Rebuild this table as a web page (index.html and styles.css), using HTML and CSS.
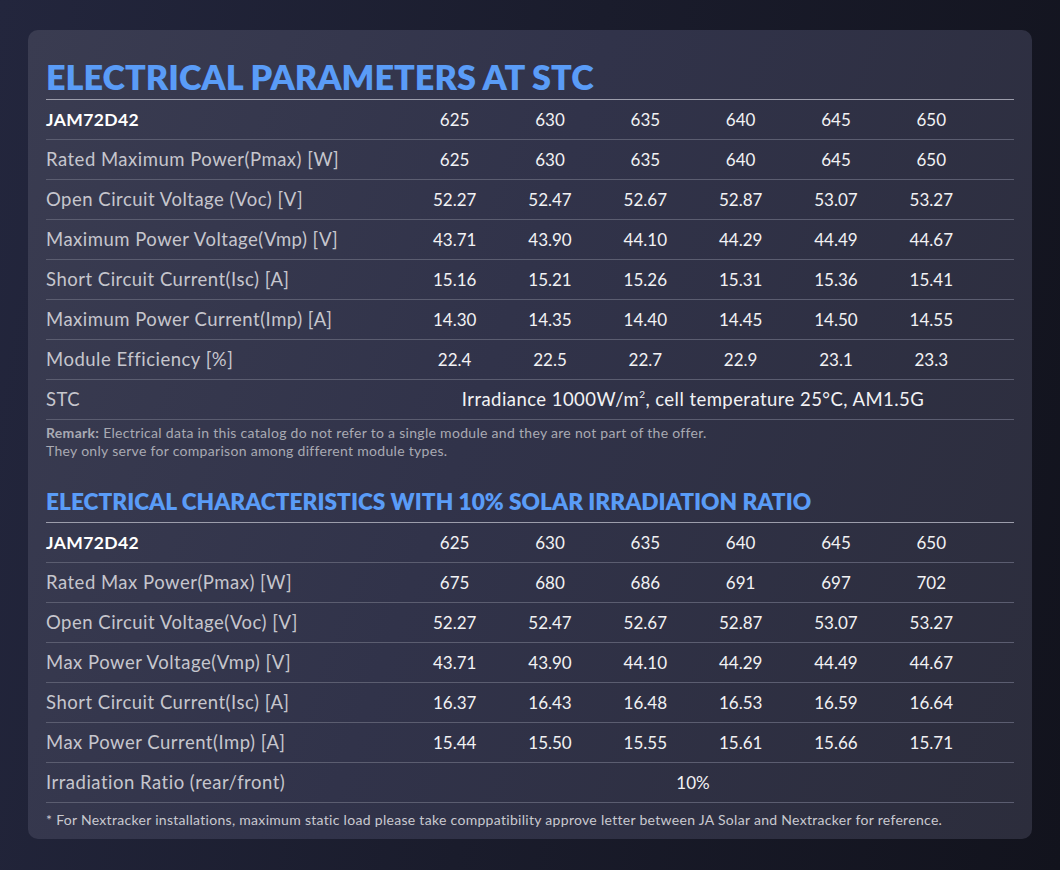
FILE: index.html
```html
<!DOCTYPE html>
<html lang="en">
<head>
<meta charset="utf-8">
<title>Electrical Parameters</title>
<link rel="stylesheet" href="styles.css">
</head>
<body>
<div class="card">
  <h1 class="title">ELECTRICAL PARAMETERS AT STC</h1>
  <div class="table">
    <div class="row head"><div class="label">JAM72D42</div><div class="v">625</div><div class="v">630</div><div class="v">635</div><div class="v">640</div><div class="v">645</div><div class="v">650</div></div>
    <div class="row"><div class="label">Rated Maximum Power(Pmax) [W]</div><div class="v">625</div><div class="v">630</div><div class="v">635</div><div class="v">640</div><div class="v">645</div><div class="v">650</div></div>
    <div class="row"><div class="label">Open Circuit Voltage (Voc) [V]</div><div class="v">52.27</div><div class="v">52.47</div><div class="v">52.67</div><div class="v">52.87</div><div class="v">53.07</div><div class="v">53.27</div></div>
    <div class="row"><div class="label">Maximum Power Voltage(Vmp) [V]</div><div class="v">43.71</div><div class="v">43.90</div><div class="v">44.10</div><div class="v">44.29</div><div class="v">44.49</div><div class="v">44.67</div></div>
    <div class="row"><div class="label">Short Circuit Current(Isc) [A]</div><div class="v">15.16</div><div class="v">15.21</div><div class="v">15.26</div><div class="v">15.31</div><div class="v">15.36</div><div class="v">15.41</div></div>
    <div class="row"><div class="label">Maximum Power Current(Imp) [A]</div><div class="v">14.30</div><div class="v">14.35</div><div class="v">14.40</div><div class="v">14.45</div><div class="v">14.50</div><div class="v">14.55</div></div>
    <div class="row"><div class="label">Module Efficiency [%]</div><div class="v">22.4</div><div class="v">22.5</div><div class="v">22.7</div><div class="v">22.9</div><div class="v">23.1</div><div class="v">23.3</div></div>
    <div class="row"><div class="label">STC</div><div class="v span wide">Irradiance 1000W/m<sup>2</sup>, cell temperature 25°C, AM1.5G</div></div>
  </div>
  <p class="remark"><b>Remark:</b> Electrical data in this catalog do not refer to a single module and they are not part of the offer.<br>They only serve for comparison among different module types.</p>

  <h2 class="subtitle">ELECTRICAL CHARACTERISTICS WITH 10% SOLAR IRRADIATION RATIO</h2>
  <div class="table">
    <div class="row head"><div class="label">JAM72D42</div><div class="v">625</div><div class="v">630</div><div class="v">635</div><div class="v">640</div><div class="v">645</div><div class="v">650</div></div>
    <div class="row"><div class="label">Rated Max Power(Pmax) [W]</div><div class="v">675</div><div class="v">680</div><div class="v">686</div><div class="v">691</div><div class="v">697</div><div class="v">702</div></div>
    <div class="row"><div class="label">Open Circuit Voltage(Voc) [V]</div><div class="v">52.27</div><div class="v">52.47</div><div class="v">52.67</div><div class="v">52.87</div><div class="v">53.07</div><div class="v">53.27</div></div>
    <div class="row"><div class="label">Max Power Voltage(Vmp) [V]</div><div class="v">43.71</div><div class="v">43.90</div><div class="v">44.10</div><div class="v">44.29</div><div class="v">44.49</div><div class="v">44.67</div></div>
    <div class="row"><div class="label">Short Circuit Current(Isc) [A]</div><div class="v">16.37</div><div class="v">16.43</div><div class="v">16.48</div><div class="v">16.53</div><div class="v">16.59</div><div class="v">16.64</div></div>
    <div class="row"><div class="label">Max Power Current(Imp) [A]</div><div class="v">15.44</div><div class="v">15.50</div><div class="v">15.55</div><div class="v">15.61</div><div class="v">15.66</div><div class="v">15.71</div></div>
    <div class="row"><div class="label">Irradiation Ratio (rear/front)</div><div class="v span">10%</div></div>
  </div>
  <p class="footnote">* For Nextracker installations, maximum static load please take comppatibility approve letter between JA Solar and Nextracker for reference.</p>
</div>
</body>
</html>
```

FILE: styles.css
```css
html, body {
  margin: 0;
  padding: 0;
}
body {
  width: 1060px;
  height: 870px;
  box-sizing: border-box;
  padding: 30px 28px 0 28px;
  background: linear-gradient(100deg, #23263d 0%, #1a1c2c 50%, #12131d 100%);
  font-family: "Lato", "Liberation Sans", sans-serif;
  overflow: hidden;
}
.card {
  width: 1004px;
  height: 809px;
  box-sizing: border-box;
  padding: 25px 18px 0 18px;
  border-radius: 10px;
  background: linear-gradient(110deg, #3a3c51 0%, #31334a 45%, #2c2d3c 100%);
}
.title {
  margin: 0;
  font-size: 34.2px;
  line-height: 44px;
  font-weight: 800;
  color: #5a9cf7;
}
.subtitle {
  margin: 0;
  padding-bottom: 5px;
  font-size: 22.7px;
  line-height: 30px;
  font-weight: 800;
  color: #5a9cf7;
}
.table {
  border-top: 1px solid #9c9dab;
}
.row {
  display: grid;
  grid-template-columns: 361px repeat(6, 95.33px) 1fr;
  align-items: center;
  height: 39px;
  border-bottom: 1px solid #5b5d70;
  font-size: 17px;
  padding-bottom: 1px;
  box-sizing: content-box;
}
.row {
  height: 38px;
}
.label {
  color: #c6c6cd;
  font-size: 18.5px;
  letter-spacing: 0.5px;
}
.v {
  color: #f2f2f4;
  text-align: center;
}
.span {
  grid-column: 2 / 8;
}
.wide {
  font-size: 18.5px;
  letter-spacing: 0.45px;
}
.head .label {
  color: #ffffff;
  font-weight: 700;
  font-size: 17.5px;
  letter-spacing: 0.4px;
}
sup {
  font-size: 10px;
  line-height: 0;
  vertical-align: 8px;
}
.remark {
  margin: 4px 0 27px 0;
  font-size: 14px;
  line-height: 18px;
  letter-spacing: 0.3px;
  color: #a9aab3;
}
.remark b {
  font-weight: 700;
}
.footnote {
  margin: 8px 0 0 0;
  font-size: 14px;
  line-height: 17px;
  letter-spacing: 0.3px;
  color: #c9c9d0;
}
```
